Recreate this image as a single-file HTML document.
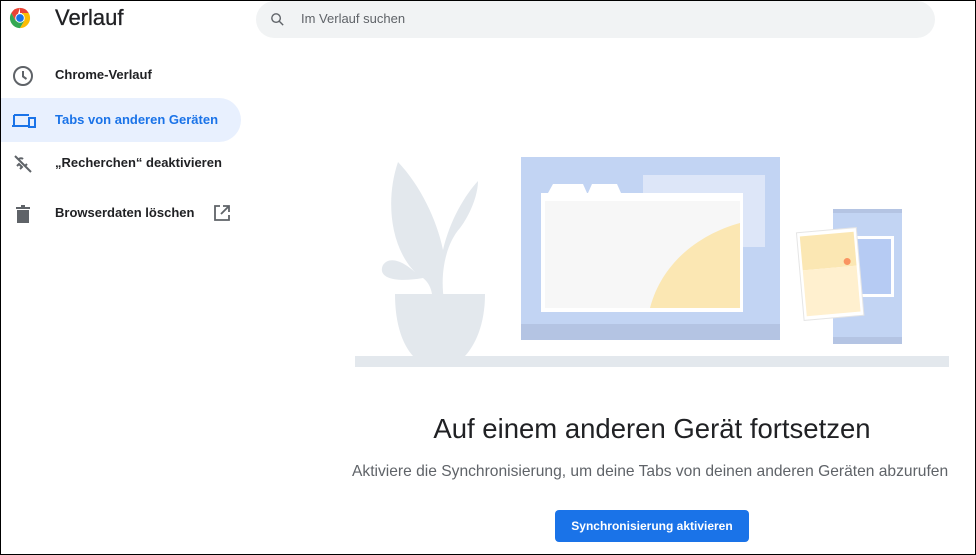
<!DOCTYPE html>
<html><head><meta charset="utf-8"><style>
*{margin:0;padding:0;box-sizing:border-box}
body{width:976px;height:555px;overflow:hidden;background:#fff;font-family:"Liberation Sans",Arial,sans-serif;position:relative}
.frame{position:absolute;inset:0;border:1px solid #000;pointer-events:none;z-index:10}
.abs{position:absolute}
.title{left:55px;top:5px;font-size:22px;color:#202124;-webkit-text-stroke:0.3px #202124}
.search{left:256px;top:1px;width:679px;height:37px;background:#f1f3f4;border-radius:19px}
.search span{position:absolute;left:45px;top:10px;font-size:13px;color:#5f6368}
.nav{left:0;width:241px;height:44px;font-size:13px;font-weight:bold;color:#202124}
.nav span{position:absolute;left:55px;top:14px}
.nav svg{position:absolute;left:11px;top:11px}
.sel{background:#e8f0fe;border-radius:0 22px 22px 0;color:#1a73e8}
h1{position:absolute;left:0;width:1304px;top:413px;font-size:27.5px;font-weight:normal;color:#202124;text-align:center}
.sub{position:absolute;left:352px;top:463px;font-size:15.6px;color:#5f6368;white-space:nowrap}
.btn{left:555px;top:510px;width:194px;height:32px;background:#1a73e8;border-radius:4px;color:#fff;font-size:12px;font-weight:bold;text-align:center;line-height:32px}
</style></head><body>
<div class="frame"></div>
<svg class="abs" style="left:9px;top:7px" width="22" height="22" viewBox="0 0 24 24">
<path d="M12 1 A11 11 0 0 0 2.5 6.5 L7.2 14.8 Z" fill="#ea4335"/>
<path d="M2.5 6.5 A11 11 0 0 0 12 23 L16.8 14.8 L7.2 14.8 Z" fill="#34a853"/>
<path d="M12 1 L21.5 6.5 A11 11 0 0 1 12 23 L16.8 14.8 Z" fill="#fbbc04"/>
<path d="M12 1 A11 11 0 0 1 21.5 6.5 L12 6.5 Z" fill="#ea4335"/>
<circle cx="12" cy="12" r="5.2" fill="#fff"/><circle cx="12" cy="12" r="4.2" fill="#1a73e8"/></svg>
<div class="abs title">Verlauf</div>
<div class="abs search"><svg style="position:absolute;left:13px;top:10px" width="17" height="17" viewBox="0 0 24 24"><circle cx="10" cy="10" r="6" fill="none" stroke="#5f6368" stroke-width="2"/><path d="M14.5 14.5 L20 20" stroke="#5f6368" stroke-width="2"/></svg><span>Im Verlauf suchen</span></div>

<div class="abs nav" style="top:53px"><svg width="24" height="24" viewBox="0 0 24 24"><circle cx="12" cy="12" r="9" fill="none" stroke="#5f6368" stroke-width="2"/><path d="M12 7v5.5l3.5 2.5" fill="none" stroke="#5f6368" stroke-width="2"/></svg><span>Chrome-Verlauf</span></div>
<div class="abs nav sel" style="top:98px"><svg width="26" height="24" viewBox="0 0 26 24"><path d="M3 6h15M3 6v11M1 17h16" fill="none" stroke="#1a73e8" stroke-width="2"/><rect x="18" y="9" width="6" height="9" fill="none" stroke="#1a73e8" stroke-width="2"/></svg><span>Tabs von anderen Geräten</span></div>
<div class="abs nav" style="top:141px"><svg width="24" height="24" viewBox="0 0 24 24"><path d="M4 4l16 16M8 7c1-1 3-1 4 0M16 12l-2 2M6 14l2-2 3 3-2 2" fill="none" stroke="#5f6368" stroke-width="2"/></svg><span>„Recherchen“ deaktivieren</span></div>
<div class="abs nav" style="top:191px"><svg width="24" height="24" viewBox="0 0 24 24"><path d="M6 8h12v13H6zM5 5h14v2H5zM10 3h4v2h-4z" fill="#5f6368"/></svg><span>Browserdaten löschen</span><svg style="left:213px;top:13px" width="18" height="18" viewBox="0 0 18 18"><path d="M7 2H2v14h14v-5M10 2h6v6M16 2L8 10" fill="none" stroke="#5f6368" stroke-width="1.8"/></svg></div>

<svg class="abs" style="left:0;top:0" width="976" height="400">
<rect x="355" y="356" width="594" height="11" fill="#e3e8ed"/>
<path d="M398 162 C385 200 390 250 418 275 C405 262 390 255 383 265 C377 278 395 283 423 278 C432 285 432 295 433 300 L444 300 C440 275 445 245 460 228 C470 215 478 195 478 181 C465 195 450 220 443 250 C437 220 420 185 398 162Z" fill="#e3e8ed"/>
<path d="M395 294 H485 C485 325 475 345 465 356 H413 C403 345 395 325 395 294Z" fill="#e3e8ed"/>
<rect x="521" y="157" width="259" height="183" fill="#c2d4f3"/>
<rect x="521" y="324" width="259" height="16" fill="#b4c4e3"/>
<rect x="643" y="175" width="122" height="72" fill="#dde6f8"/>
<path d="M548 193 L553 184 H583 L587 193Z M588 193 L592 184 H617 L621 193Z" fill="#fff"/>
<rect x="541" y="193" width="202" height="119" fill="#fff"/>
<rect x="545" y="201" width="195" height="107" fill="#f7f7f7"/>
<path d="M650 308 C662 262 700 234 740 223 V308Z" fill="#fbe7b3"/>
<rect x="833" y="209" width="69" height="135" fill="#c2d4f3"/>
<rect x="833" y="209" width="69" height="4" fill="#b4c4e3"/>
<rect x="833" y="337" width="69" height="7" fill="#b4c4e3"/>
<rect x="853" y="236" width="41" height="61" fill="#fff"/>
<rect x="856" y="239" width="35" height="55" fill="#b6cbf3"/>
<g transform="rotate(-5 830 272)"><rect x="800" y="230" width="60" height="88" fill="#fff" stroke="#e5e5e5"/><rect x="803" y="234" width="54" height="34" fill="#fbe7b3"/><rect x="803" y="268" width="54" height="46" fill="#fff0cf"/><circle cx="848" cy="263" r="3.5" fill="#fa9461"/></g>
</svg>

<h1>Auf einem anderen Gerät fortsetzen</h1>
<div class="sub">Aktiviere die Synchronisierung, um deine Tabs von deinen anderen Geräten abzurufen</div>
<div class="abs btn">Synchronisierung aktivieren</div>
</body></html>
